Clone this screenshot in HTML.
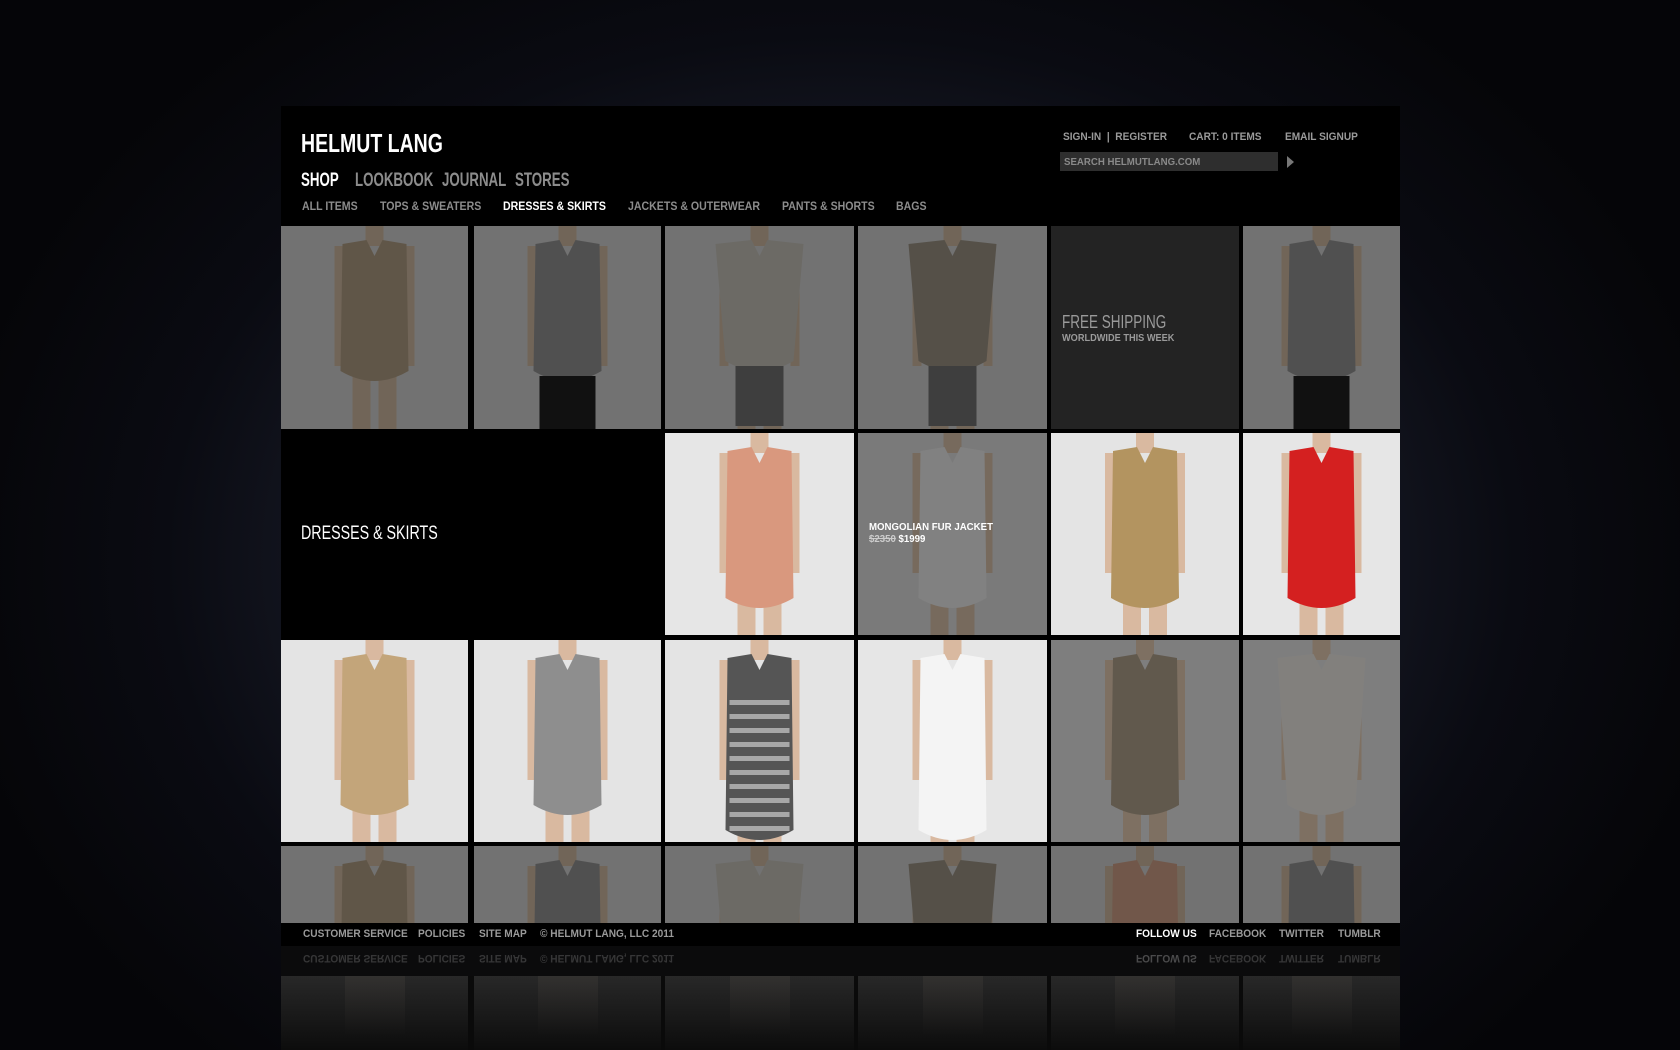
<!DOCTYPE html>
<html><head><meta charset="utf-8">
<style>
*{margin:0;padding:0;box-sizing:border-box}
body{width:1680px;height:1050px;overflow:hidden;position:relative;
background:radial-gradient(ellipse 900px 700px at 840px 560px,#2c3042 0%,#1a1d2a 45%,#0a0b12 75%,#050508 100%);
font-family:"Liberation Sans",sans-serif}
.a{position:absolute}
.hd{left:281px;top:106px;width:1119px;height:120px;background:#000}
.t{position:absolute;white-space:nowrap;font-weight:bold;transform:scaleX(.92);transform-origin:left}
.tile{position:absolute;overflow:hidden}
.ft{left:281px;top:923px;width:1119px;height:23px;background:#000}
.ft span,.rf span{position:absolute;top:5px;font-size:11px;font-weight:bold;color:#9a9a9a;white-space:nowrap;transform:scaleX(.92);transform-origin:left}
</style></head><body>
<div class="a hd">
 <div class="t" style="left:20px;top:22px;font-size:26px;color:#fff;transform:scaleX(.75)">HELMUT LANG</div>
 <div class="t" style="left:20px;top:64px;font-size:19px;color:#fff;transform:scaleX(.7)">SHOP</div>
 <div class="t" style="left:74px;top:64px;font-size:19px;color:#8c8c8c;transform:scaleX(.7)">LOOKBOOK</div>
 <div class="t" style="left:161px;top:64px;font-size:19px;color:#8c8c8c;transform:scaleX(.7)">JOURNAL</div>
 <div class="t" style="left:234px;top:64px;font-size:19px;color:#8c8c8c;transform:scaleX(.7)">STORES</div>
 <div class="t" style="left:21px;top:95px;font-size:11.5px;color:#8c8c8c">ALL ITEMS</div>
 <div class="t" style="left:99px;top:95px;font-size:11.5px;color:#8c8c8c">TOPS &amp; SWEATERS</div>
 <div class="t" style="left:222px;top:95px;font-size:11.5px;color:#fff">DRESSES &amp; SKIRTS</div>
 <div class="t" style="left:347px;top:95px;font-size:11.5px;color:#8c8c8c">JACKETS &amp; OUTERWEAR</div>
 <div class="t" style="left:501px;top:95px;font-size:11.5px;color:#8c8c8c">PANTS &amp; SHORTS</div>
 <div class="t" style="left:615px;top:95px;font-size:11.5px;color:#8c8c8c">BAGS</div>
 <div class="t" style="left:782px;top:25px;font-size:11px;color:#9a9a9a">SIGN-IN &nbsp;|&nbsp; REGISTER</div>
 <div class="t" style="left:908px;top:25px;font-size:11px;color:#9a9a9a">CART: 0 ITEMS</div>
 <div class="t" style="left:1004px;top:25px;font-size:11px;color:#9a9a9a">EMAIL SIGNUP</div>
 <div class="a" style="left:779px;top:46px;width:218px;height:19px;background:#2e2e2e"></div>
 <div class="t" style="left:783px;top:50px;font-size:10.5px;color:#8a8a8a">SEARCH HELMUTLANG.COM</div>
 <div class="a" style="left:1006px;top:50px;width:0;height:0;border-left:7px solid #777;border-top:6px solid transparent;border-bottom:6px solid transparent"></div>
</div>
<div class="a" style="left:281px;top:226px;width:1119px;height:697px;background:#000"></div>
<div id="g"></div>
<div class="a ft">
 <span style="left:22px">CUSTOMER SERVICE</span><span style="left:137px">POLICIES</span><span style="left:198px">SITE MAP</span><span style="left:259px">© HELMUT LANG, LLC 2011</span>
 <span style="left:855px;color:#fff">FOLLOW US</span><span style="left:928px">FACEBOOK</span><span style="left:998px">TWITTER</span><span style="left:1057px">TUMBLR</span>
</div>
<div class="a" style="left:281px;top:946px;width:1119px;height:30px;background:#0b0b0c;overflow:hidden">
 <div class="rf" style="position:absolute;left:0;top:0;width:1119px;height:23px;transform:scaleY(-1);opacity:.3">
 <span style="left:22px">CUSTOMER SERVICE</span><span style="left:137px">POLICIES</span><span style="left:198px">SITE MAP</span><span style="left:259px">© HELMUT LANG, LLC 2011</span>
 <span style="left:855px;color:#ddd">FOLLOW US</span><span style="left:928px">FACEBOOK</span><span style="left:998px">TWITTER</span><span style="left:1057px">TUMBLR</span>
 </div>
</div>
<div id="r" class="a" style="left:281px;top:976px;width:1119px;height:74px;background:#0a0a0a;overflow:hidden"></div>
<script>
var cx=[281,474,665,858,1051,1243],cw=[187,187,189,189,188,157];
var ry=[226,433,640,846],rh=[203,202,202,77];
var T=[
[["#dadada","#b9a68a","#d9c2aa",.48,0],["#dadada","#9a9a9a","#d9c2aa",.48,1],["#dadada","#cfcbc2","#d9c2aa",.48,2],["#dadada","#a39a8b","#d9c2aa",.48,2],null,["#dadada","#9a9a9a","#d9c2aa",.48,1]],
[null,null,["#e6e6e6","#d9987e","#d9b9a0",0,3],["#dedede","#ececec","#d9c2aa",.45,3],["#e4e4e4","#b39460","#d9b9a0",0,3],["#e6e6e6","#d42020","#d9b9a0",0,3]],
[["#e4e4e4","#c3a57a","#d9b9a0",0,3],["#e4e4e4","#8e8e8e","#d9b9a0",0,3],["#e4e4e4","#555","#d9b9a0",0,4],["#e6e6e6","#f4f4f4","#d9b9a0",0,4],["#dadada","#a89a86","#d9c2aa",.42,3],["#dadada","#e0ddd8","#d9c2aa",.42,5]],
[["#dadada","#b9a68a","#d9c2aa",.48,0],["#dadada","#9a9a9a","#d9c2aa",.48,1],["#dadada","#cfcbc2","#d9c2aa",.48,2],["#dadada","#a39a8b","#d9c2aa",.48,2],["#dadada","#d9a88e","#d9c2aa",.48,0],["#dadada","#9a9a9a","#d9c2aa",.48,1]]];
function fig(w,h,t,H){var m=w/2,s='<svg width="'+w+'" height="'+H+'" style="position:absolute;left:0;top:0"><rect width="'+w+'" height="'+H+'" fill="'+t[0]+'"/>';
var k=t[2],g=t[1],sh=t[4];
s+='<rect x="'+(m-9)+'" y="0" width="18" height="20" fill="'+k+'"/>';
s+='<rect x="'+(m-40)+'" y="20" width="9" height="120" fill="'+k+'"/><rect x="'+(m+31)+'" y="20" width="9" height="120" fill="'+k+'"/>';
s+='<rect x="'+(m-22)+'" y="140" width="18" height="70" fill="'+k+'"/><rect x="'+(m+4)+'" y="140" width="18" height="70" fill="'+k+'"/>';
var bot=sh==4?200:(sh==2?145:(sh==0||sh==1?155:175));
var sl=sh==2||sh==5?44:32;
s+='<path d="M'+(m-sl)+' 18 L'+(m-8)+' 14 L'+m+' 30 L'+(m+8)+' 14 L'+(m+sl)+' 18 L'+(m+34)+' '+(bot-10)+' Q'+m+' '+(bot+10)+' '+(m-34)+' '+(bot-10)+' Z" fill="'+g+'"/>';
if(sh==1)s+='<rect x="'+(m-28)+'" y="'+(bot-5)+'" width="56" height="60" fill="#222"/>';
if(sh==2)s+='<rect x="'+(m-24)+'" y="'+(bot-5)+'" width="48" height="60" fill="#777"/>';
if(sh==4&&g=="#555")for(var i=0;i<10;i++)s+='<rect x="'+(m-30)+'" y="'+(60+i*14)+'" width="60" height="5" fill="#ddd" opacity=".6"/>';
if(t[3])s+='<rect width="'+w+'" height="'+H+'" fill="#000" opacity="'+t[3]+'"/>';
return s+'</svg>';}
var html='';
for(var r=0;r<4;r++)for(var c=0;c<6;c++){var t=T[r][c];if(!t)continue;
html+='<div class="tile" style="left:'+cx[c]+'px;top:'+ry[r]+'px;width:'+cw[c]+'px;height:'+rh[r]+'px">'+fig(cw[c],203,t,rh[r])+'</div>';}
html+='<div class="tile" style="left:1051px;top:226px;width:188px;height:203px;background:#232323"><div class="t" style="left:11px;top:86px;font-size:18px;font-weight:normal;color:#9a9a9a;transform:scaleX(.75)">FREE SHIPPING</div><div class="t" style="left:11px;top:107px;font-size:10px;color:#9a9a9a">WORLDWIDE THIS WEEK</div></div>';
html+='<div class="t" style="left:301px;top:523px;font-size:19px;font-weight:normal;color:#fff;transform:scaleX(.75)">DRESSES &amp; SKIRTS</div>';
html+='<div class="t" style="left:869px;top:521px;font-size:10.5px;color:#fff">MONGOLIAN FUR JACKET</div><div class="t" style="left:869px;top:533px;font-size:10.5px;color:#fff"><s style="color:#ccc">$2350</s> $1999</div>';
document.getElementById('g').innerHTML=html;
var rr='';for(var c=0;c<6;c++){rr+='<div style="position:absolute;left:'+(cx[c]-281)+'px;top:0;width:'+cw[c]+'px;height:74px;background:linear-gradient(#282828,#0c0c0c)"><div style="position:absolute;left:'+(cw[c]/2-30)+'px;top:0;width:60px;height:60px;background:linear-gradient(rgba(110,100,90,.15),transparent)"></div></div>';}
document.getElementById('r').innerHTML=rr;
</script>
</body></html>
